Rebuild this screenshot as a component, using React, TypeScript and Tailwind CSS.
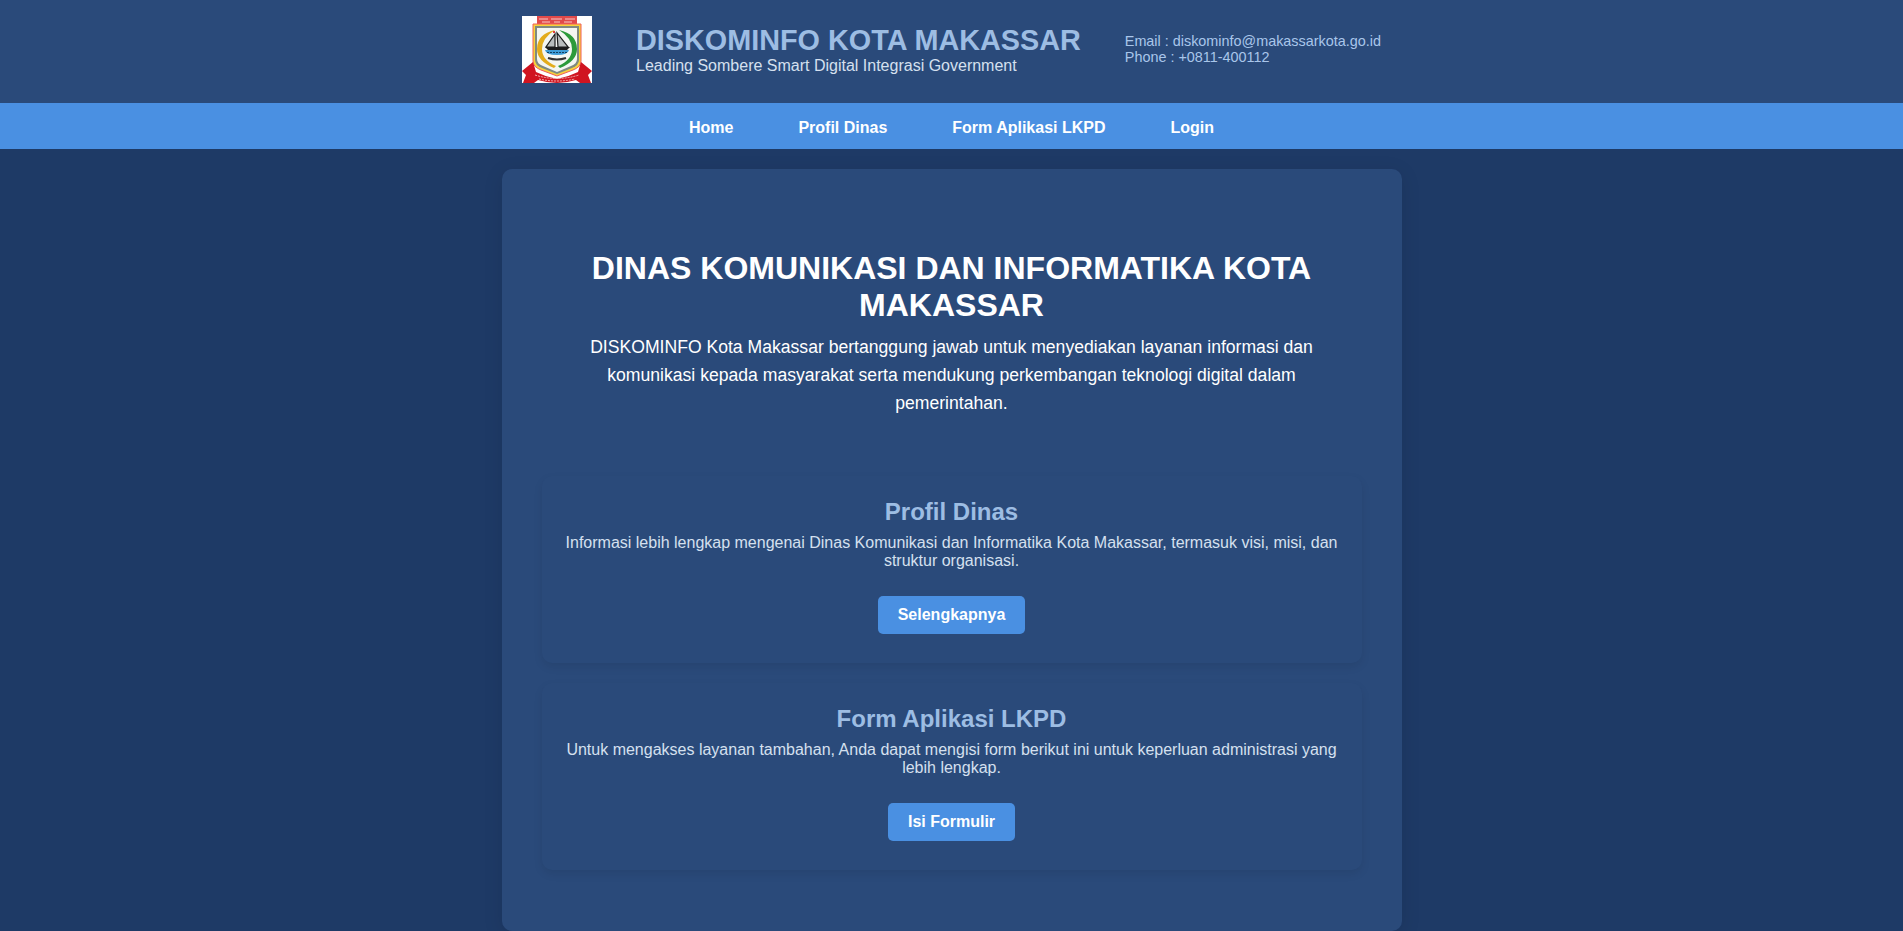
const Logo = () => (
  <svg viewBox="0 0 70 67" className="h-[67px] w-[70px] shrink-0 bg-white">
    {/* crown */}
    <rect x="15" y="0" width="40" height="8" fill="#e04a4a" />
    <path d="M17 3h9M29 3h11M43 3h10M20 6h8M32 6h6M42 6h8" stroke="#f7c9c9" strokeWidth="1" />
    {/* shield */}
    <path d="M11 8h48v37q0 6-8 9l-16 6-16-6q-8-3-8-9z" fill="#f6d23a" stroke="#f0605a" strokeWidth="1" />
    <path d="M13 10h44v34q0 5-7 8l-15 6-15-6q-7-3-7-8z" fill="#808a80" />
    <path d="M15 12h40v31q0 5-6 7l-14 6-14-6q-6-2-6-7z" fill="#f4f6f2" />
    {/* padi */}
    <path d="M33 14q-18 4-18 19 0 12 17 19l2-2Q20 44 20 33q0-11 13-19z" fill="#e3ac1c" />
    {/* kapas */}
    <path d="M37 14q18 4 18 19 0 12-17 19l-2-2q14-6 14-17 0-11-13-19z" fill="#2c9a3a" />
    {/* ship */}
    <path d="M35 17l1 14h10zM33 18L24 31h9z" fill="#b9bdbd" stroke="#1c1c1c" strokeWidth="1.2" />
    <path d="M23 31h25l-3 3H26z" fill="#1c1c1c" />
    <path d="M23 34h24q-1 5-12 5t-12-5z" fill="#3e9bd6" />
    <path d="M25 36.5h20" stroke="#12405f" strokeWidth="1" strokeDasharray="2 1" />
    <path d="M26 42q9 3 18 0" stroke="#333" strokeWidth="2" fill="none" />
    <rect x="31" y="15" width="2" height="2" fill="#e04040" />
    {/* ribbon */}
    <path d="M0 55l11-9 3 10q10 5 21 7 11-2 21-7l3-10 11 9-4 4 3 8H58l-4-3q-10 3-19 3t-19-3l-4 3H1l3-8z" fill="#d01420" />
    <path d="M13 59q22 7 44 0" stroke="#f3b5b5" strokeWidth="1" fill="none" strokeDasharray="2 1" />
    <path d="M17 63q18 4 36 0" stroke="#f3b5b5" strokeWidth="1" fill="none" strokeDasharray="2 1" />
  </svg>
);

const sections = [
  {
    title: "Profil Dinas",
    text: "Informasi lebih lengkap mengenai Dinas Komunikasi dan Informatika Kota Makassar, termasuk visi, misi, dan struktur organisasi.",
    button: "Selengkapnya",
  },
  {
    title: "Form Aplikasi LKPD",
    text: "Untuk mengakses layanan tambahan, Anda dapat mengisi form berikut ini untuk keperluan administrasi yang lebih lengkap.",
    button: "Isi Formulir",
  },
];

const menu = ["Home", "Profil Dinas", "Form Aplikasi LKPD", "Login"];

export default function App() {
  return (
    <div className="h-[931px] overflow-hidden bg-[#1e3a66] font-['Liberation_Sans',Arial,sans-serif] text-white">
      <header className="flex h-[103px] items-start justify-center bg-[#2a4a7a] pt-4">
        <Logo />
        <div className="ml-11 mt-[7px] whitespace-nowrap">
          <h1 className="text-[28.8px] font-bold leading-[34px] text-[#9dbde3]">DISKOMINFO KOTA MAKASSAR</h1>
          <p className="text-base leading-[18px] text-[#d5e0ef]">Leading Sombere Smart Digital Integrasi Government</p>
        </div>
        <div className="ml-11 mt-[17px] whitespace-nowrap text-[14.4px] leading-4 text-[#a9c6ea]">
          <p>Email : diskominfo@makassarkota.go.id</p>
          <p>Phone : +0811-400112</p>
        </div>
      </header>

      <nav className="flex h-[46px] items-center justify-center gap-[65px] bg-[#4a90e2] pt-[3px] text-base font-bold">
        {menu.map((item) => (
          <a key={item}>{item}</a>
        ))}
      </nav>

      <main className="mx-auto mt-5 h-[762px] w-[900px] rounded-[10px] bg-[#2a4a7a] px-10 pt-[81px] text-center shadow-[0_4px_20px_rgba(0,0,0,0.1)]">
        <h2 className="text-[32px] font-bold leading-[37px]">DINAS KOMUNIKASI DAN INFORMATIKA KOTA MAKASSAR</h2>
        <p className="mx-auto mt-[9px] w-[740px] text-[17.6px] leading-[28.16px]">
          DISKOMINFO Kota Makassar bertanggung jawab untuk menyediakan layanan informasi dan komunikasi kepada masyarakat serta mendukung perkembangan teknologi digital dalam pemerintahan.
        </p>
        <div className="mt-[58.5px] flex flex-col gap-5">
          {sections.map((s) => (
            <section key={s.title} className="h-[187px] rounded-[10px] bg-[#2a4a7a] px-5 pt-[22px] shadow-[0_4px_10px_rgba(0,0,0,0.08)]">
              <h3 className="text-2xl font-bold leading-7 text-[#9dbde3]">{s.title}</h3>
              <p className="mt-2 text-base leading-[18.4px] text-[#d5e0ef]">{s.text}</p>
              <button className="mt-[25px] rounded-[5px] bg-[#4a90e2] px-5 py-[10px] text-base font-bold leading-[18px] text-white">
                {s.button}
              </button>
            </section>
          ))}
        </div>
      </main>
    </div>
  );
}
